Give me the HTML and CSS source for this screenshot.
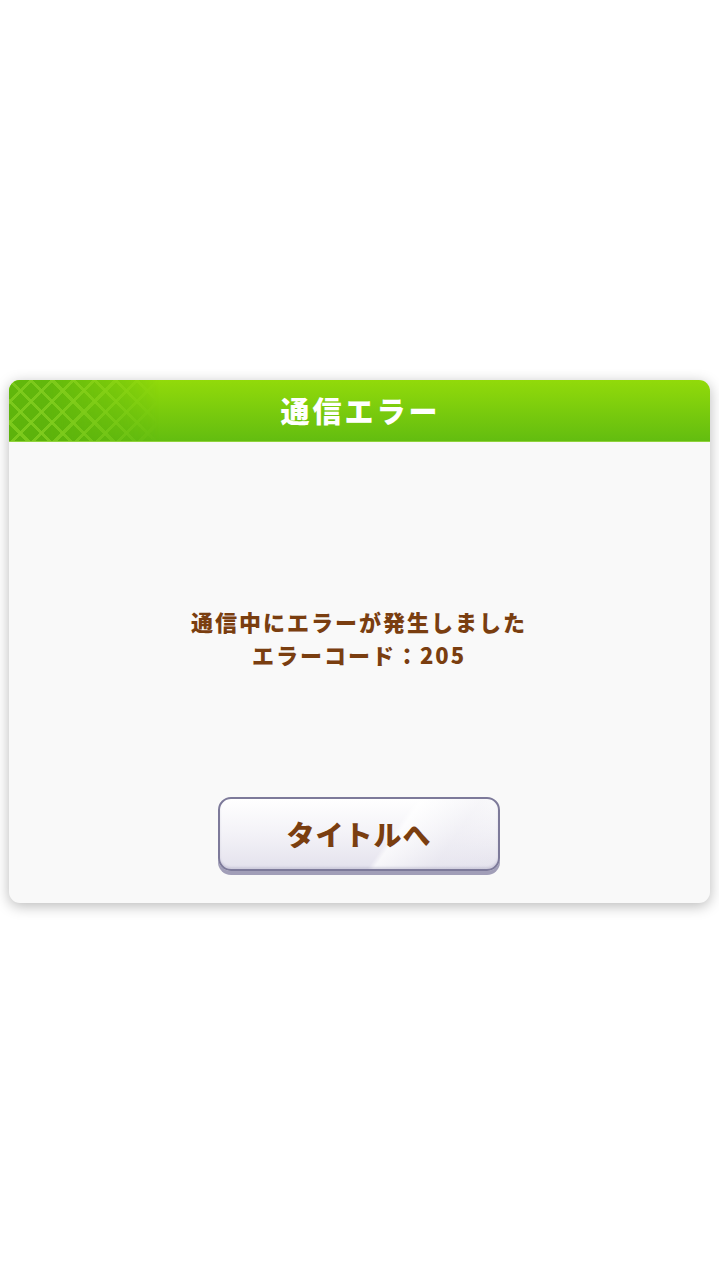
FILE: index.html
```html
<!DOCTYPE html>
<html lang="ja">
<head>
    <meta charset="UTF-8">
    <meta name="viewport" content="width=device-width, initial-scale=1.0">
    <title>通信エラー</title>
    <link rel="stylesheet" href="styles.css">
</head>
<body>
    <div class="screen">
        <div class="dialog">
            <div class="dialog-header">
                <div class="header-pattern"></div>
                <h1>通信エラー</h1>
            </div>
            <div class="dialog-body">
                <p class="message">通信中にエラーが発生しました<br>エラーコード：205</p>
                <button class="btn-title">タイトルへ</button>
            </div>
        </div>
    </div>
</body>
</html>
```

FILE: styles.css
```css
body {
    margin: 0;
    padding: 0;
    background-color: #fff;
    font-family: "Noto Sans CJK JP", "Noto Sans", sans-serif;
}

.screen {
    min-height: 100vh;
    display: flex;
    flex-direction: column;
    justify-content: center;
    align-items: center;
}

.dialog {
    width: 701px;
    margin-left: -1px;
    margin-top: 2px;
    border-radius: 11px;
    overflow: hidden;
    background-color: #f9f9f9;
    box-shadow: 0 3px 14px rgba(0, 0, 0, 0.28);
}

.dialog-header {
    height: 62px;
    position: relative;
    display: flex;
    align-items: center;
    justify-content: center;
    background: linear-gradient(#92da0a, #63bd10);
    border-bottom: 1px solid #8fd23c;
    box-sizing: border-box;
}

.header-pattern {
    position: absolute;
    left: 0;
    top: 0;
    width: 150px;
    height: 100%;
    background-image:
        repeating-linear-gradient(45deg, transparent 0 12px, rgba(128, 204, 30, 0.85) 12px 15px),
        repeating-linear-gradient(-45deg, transparent 0 12px, rgba(128, 204, 30, 0.85) 12px 15px),
        linear-gradient(#62b80c, #5cb20b);
    -webkit-mask-image: linear-gradient(to right, #000 25%, rgba(0, 0, 0, 0.4) 75%, transparent 100%);
    mask-image: linear-gradient(to right, #000 25%, rgba(0, 0, 0, 0.4) 75%, transparent 100%);
}

.dialog-header h1 {
    position: relative;
    margin: 0 0 0 3px;
    color: #fff;
    font-size: 29px;
    font-weight: 900;
    letter-spacing: 3px;
    line-height: 1;
}

.dialog-body {
    display: flex;
    flex-direction: column;
    align-items: center;
    padding: 163px 0 32px;
}

.message {
    margin: 0;
    color: #7a3e10;
    font-size: 22px;
    font-weight: 900;
    line-height: 33px;
    letter-spacing: 2px;
    text-align: center;
}

.btn-title {
    margin-top: 126px;
    width: 282px;
    height: 74px;
    border: 2px solid #7d7a9a;
    border-radius: 13px;
    background:
        linear-gradient(125deg, transparent 60%, rgba(255, 255, 255, 0.7) 62%, rgba(236, 235, 242, 0.4) 80%, transparent 100%),
        linear-gradient(#ffffff, #f3f2f7 50%, #e4e2ed);
    box-shadow: 0 4px 0 #a19eb8, inset 0 -2px 2px rgba(140, 135, 170, 0.25);
    color: #7a3e10;
    font-family: "Noto Sans CJK JP", "Noto Sans", sans-serif;
    font-size: 28px;
    font-weight: 900;
    letter-spacing: 1px;
    cursor: pointer;
}
```
